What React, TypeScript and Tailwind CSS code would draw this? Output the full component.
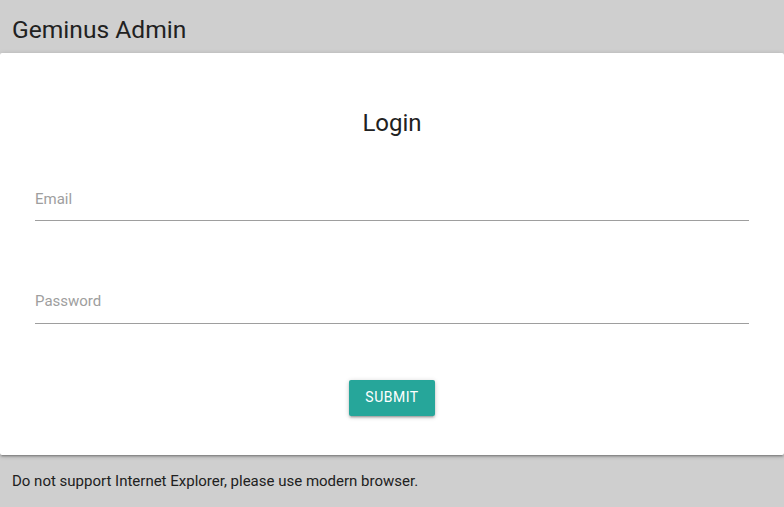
export default function App() {
  return (
    <div
      className="min-h-screen bg-[#cfcfcf] text-[#212121]"
      style={{ fontFamily: "Roboto, 'Liberation Sans', sans-serif" }}
    >
      {/* Top bar */}
      <header className="h-[53px] flex items-center pl-3">
        <h1 className="text-[24.6px] leading-[32px] font-normal pt-[6px]">Geminus Admin</h1>
      </header>

      {/* Login card */}
      <main className="bg-white rounded-[2px] shadow-[0_2px_2px_0_rgba(0,0,0,0.14),0_3px_1px_-2px_rgba(0,0,0,0.12),0_1px_5px_0_rgba(0,0,0,0.2)] pt-[54px] pb-[39px] px-[35px]">
        <h2 className="text-center text-[24px] leading-[32px] font-normal">Login</h2>

        <div className="mt-[33px] h-[49px] border-b border-[#9e9e9e] pt-[15px]">
          <label className="block text-[15px] leading-[24px] text-[#9e9e9e]">Email</label>
        </div>

        <div className="mt-[54px] h-[49px] border-b border-[#9e9e9e] pt-[14px]">
          <label className="block text-[15px] leading-[24px] text-[#9e9e9e]">Password</label>
        </div>

        <div className="mt-[56px] flex justify-center">
          <button className="h-9 w-[86px] pb-[2px] rounded-[2px] bg-[#26a69a] text-white text-[14px] tracking-[0.5px] uppercase shadow-[0_2px_2px_0_rgba(0,0,0,0.14),0_3px_1px_-2px_rgba(0,0,0,0.12),0_1px_5px_0_rgba(0,0,0,0.2)]">
            Submit
          </button>
        </div>
      </main>

      <footer className="pl-3 pt-[16px] text-[15px] leading-[20px]">
        Do not support Internet Explorer, please use modern browser.
      </footer>
    </div>
  );
}
